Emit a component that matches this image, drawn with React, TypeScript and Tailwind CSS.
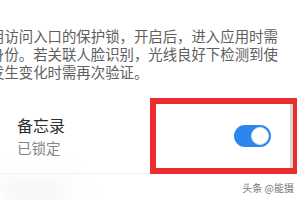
export default function App() {
  return (
    <div
      className="relative w-[300px] h-[200px] overflow-hidden bg-white"
      style={{ fontFamily: '"Noto Sans CJK SC", "Noto Sans", sans-serif' }}
    >
      <p className="ml-[-10px] pt-[27px] text-[14.4px] leading-[18px] text-[#5e5e5e] whitespace-nowrap">
        <span className="block">用访问入口的保护锁，开启后，进入应用时需</span>
        <span className="block">身份。若关联人脸识别，光线良好下检测到使</span>
        <span className="block">发生变化时需再次验证。</span>
      </p>

      <div className="mt-[17px] flex h-[76px]">
        <div className="flex w-[150px] flex-col justify-center border-b border-[#f1f1f1] pl-[17px]">
          <span className="text-[16px] leading-[22px] text-[#2e2e2e]">备忘录</span>
          <span className="mt-[2px] text-[14.5px] leading-[20px] text-[#858585]">已锁定</span>
        </div>
        <div className="flex w-[147px] items-center justify-end border-[6px] border-r-[4px] border-[#ee2b2e] pr-[22px] shadow-[inset_-3px_0_0_#d6d6d6]">
          <div className="flex h-[22px] w-[37px] items-center justify-end rounded-full bg-[#2d86ef] pr-[2px]">
            <div className="h-[18px] w-[18px] rounded-full border border-[#dfe6ee] bg-white" />
          </div>
        </div>
      </div>

      <div className="absolute bottom-0 left-0 h-[18px] w-[70px] rounded-full bg-[#eef2ee] blur-md" />
      <span className="absolute bottom-[6px] right-[6px] text-[10px] leading-[12px] text-[#777]">
        头条 @能摄
      </span>
    </div>
  );
}
